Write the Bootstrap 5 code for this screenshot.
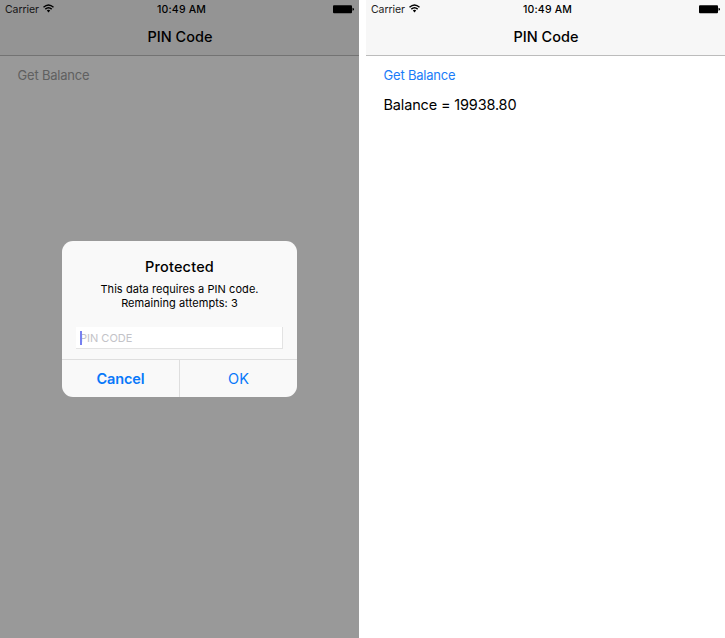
<!DOCTYPE html>
<html lang="en">
<head>
<meta charset="utf-8">
<meta name="viewport" content="width=device-width, initial-scale=1">
<title>PIN Code</title>
<link href="https://cdn.jsdelivr.net/npm/bootstrap@5.3.0/dist/css/bootstrap.min.css" rel="stylesheet">
<style>
body { font-family: Inter, "Liberation Sans", sans-serif; color: #000; }
.screens { width: 725px; height: 638px; column-gap: 7px; }
.phone { width: 359px; height: 638px; background: #fff; }
.topbar { height: 56px; background: #f7f7f7; border-bottom: 1px solid #bcbcbc; }
.status-row { height: 18px; padding: 0 5px; font-size: 10.5px; line-height: 18px; }
.status-side { flex: 1 1 0; }
.carrier { color: #222; letter-spacing: -.06px; padding-top: 1px; }
.clock { font-weight: 500; letter-spacing: .18px; padding: 1px 0 0 4px; }
.wifi { margin: -1px 0 0 4px; }
.title { font-size: 14.5px; font-weight: 500; line-height: 37px; padding-left: 1px; }
.content { padding: 10px 17.5px; }
.action { font-size: 13px; line-height: 19px; letter-spacing: -.2px; color: #1a7cf8; text-decoration: none; }
.result { font-size: 14.5px; line-height: 20px; letter-spacing: -.16px; margin-top: 10px; }
.dimmed { background: #999; }
.dimmed .topbar { background: #949494; border-color: #737373; }
.dimmed .carrier { color: #151515; }
.dimmed .action { color: #606060; }
.overlay { inset: 0; padding-top: 241px; }
.dialog-box { width: 235px; height: 156px; border-radius: 11px; background: #f9f9f9; }
.dialog-title { font-size: 14.5px; font-weight: 500; line-height: 20px; letter-spacing: .18px; padding-top: 16px; }
.dialog-text { font-size: 11px; line-height: 14px; letter-spacing: .06px; margin-top: 5px; }
.pin-field { width: 207px; height: 22px; margin: 17px 0 0 14px; padding: 0 4px; border: 0; border-right: 1px solid #e3e3e3; border-bottom: 1px solid #e3e3e3; background: #fff; font-size: 11px; line-height: 22px; color: #c3c3c8; }
.caret { left: 4px; top: 4px; width: 1.5px; height: 14px; background: #7780f0; }
.dialog-actions { height: 38px; border-top: 1px solid #dedede; }
.dialog-actions .btn { flex: 1 1 0; padding: 0; border: 0; border-radius: 0; font-size: 14.5px; line-height: 38px; color: #0878fa; }
.dialog-actions .cancel { font-weight: 600; letter-spacing: -.1px; }
.dialog-actions .btn + .btn { border-left: 1px solid #dedede; }
</style>
</head>
<body class="bg-white overflow-hidden">
<main class="screens d-flex">
  <section class="phone dimmed position-relative">
    <header class="topbar">
      <div class="status-row d-flex">
        <div class="status-side d-flex align-items-center">
          <span class="carrier">Carrier</span>
          <svg class="wifi" width="11" height="9" viewBox="0 0 11 9" fill="none" stroke="#000" stroke-width="1.4"><path d="M.5 3.2Q5.5-1.4 10.5 3.2M2.3 5.1Q5.5 2.3 8.7 5.1"/><path d="M3.8 6.6Q5.5 5.1 7.2 6.6L5.5 8.4Z" fill="#000" stroke="none"/></svg>
        </div>
        <span class="clock">10:49 AM</span>
        <div class="status-side d-flex align-items-center justify-content-end">
          <svg width="21" height="9" viewBox="0 0 21 9"><rect width="19" height="8" y=".3" rx="1"/><path d="M19.5 2.8Q21 3 21 4.3T19.5 5.8Z"/></svg>
        </div>
      </div>
      <h1 class="title text-center m-0">PIN Code</h1>
    </header>
    <div class="content"><a href="#" class="action d-block">Get Balance</a></div>
    <div class="overlay position-absolute d-flex justify-content-center align-items-start">
      <div class="dialog-box d-flex flex-column overflow-hidden" role="dialog" aria-label="Protected">
        <h2 class="dialog-title text-center m-0">Protected</h2>
        <p class="dialog-text text-center mb-0">This data requires a PIN code.<br>Remaining attempts: 3</p>
        <div class="pin-field position-relative">PIN CODE<span class="caret position-absolute"></span></div>
        <div class="dialog-actions d-flex mt-auto">
          <button class="btn cancel" type="button">Cancel</button>
          <button class="btn" type="button">OK</button>
        </div>
      </div>
    </div>
  </section>
  <section class="phone">
    <header class="topbar">
      <div class="status-row d-flex">
        <div class="status-side d-flex align-items-center">
          <span class="carrier">Carrier</span>
          <svg class="wifi" width="11" height="9" viewBox="0 0 11 9" fill="none" stroke="#000" stroke-width="1.4"><path d="M.5 3.2Q5.5-1.4 10.5 3.2M2.3 5.1Q5.5 2.3 8.7 5.1"/><path d="M3.8 6.6Q5.5 5.1 7.2 6.6L5.5 8.4Z" fill="#000" stroke="none"/></svg>
        </div>
        <span class="clock">10:49 AM</span>
        <div class="status-side d-flex align-items-center justify-content-end">
          <svg width="21" height="9" viewBox="0 0 21 9"><rect width="19" height="8" y=".3" rx="1"/><path d="M19.5 2.8Q21 3 21 4.3T19.5 5.8Z"/></svg>
        </div>
      </div>
      <h1 class="title text-center m-0">PIN Code</h1>
    </header>
    <div class="content">
      <a href="#" class="action d-block">Get Balance</a>
      <p class="result mb-0">Balance = 19938.80</p>
    </div>
  </section>
</main>
<script src="https://cdn.jsdelivr.net/npm/bootstrap@5.3.0/dist/js/bootstrap.bundle.min.js"></script>
</body>
</html>
